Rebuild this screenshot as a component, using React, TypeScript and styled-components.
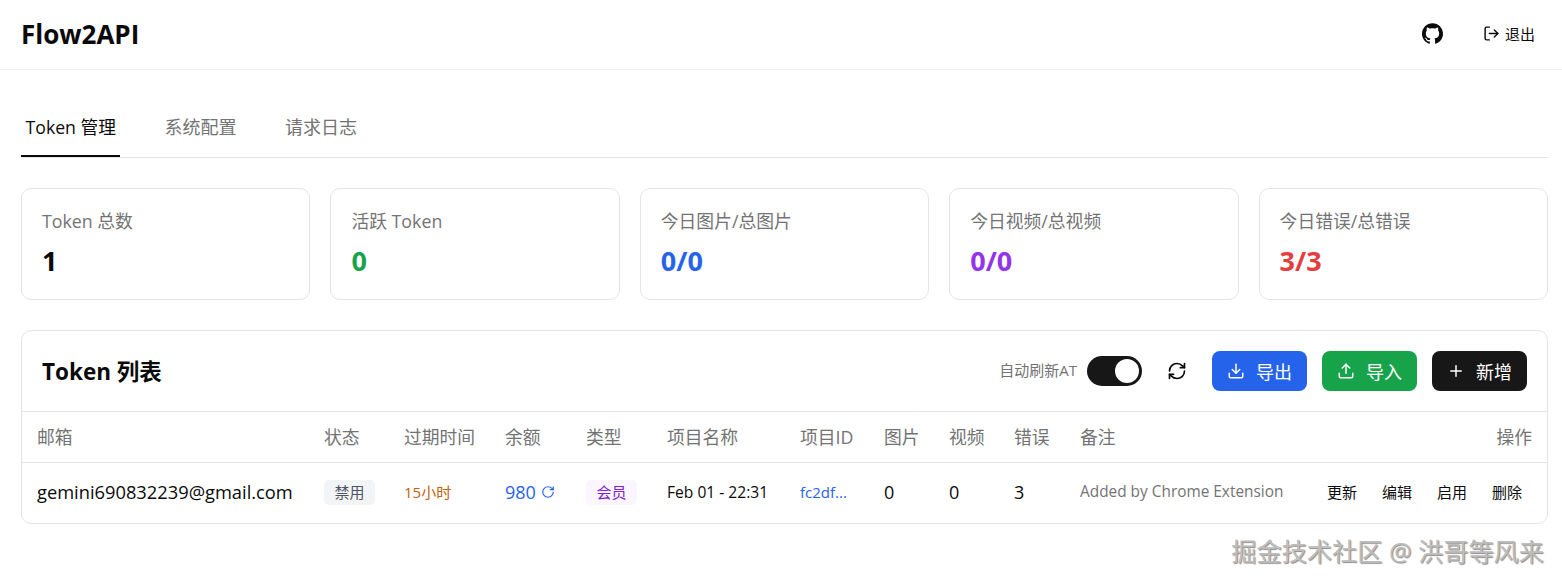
import React from "react";
import styled, { createGlobalStyle } from "styled-components";
import { Download, LogOut, Plus, RefreshCw, RotateCw, Upload } from "lucide-react";
import { SiGithub } from "react-icons/si";

const GlobalStyle = createGlobalStyle`
  html, body {
    margin: 0;
    background: #fff;
    color: #0a0a0a;
    font-family: "Open Sans", "Noto Sans CJK SC", sans-serif;
  }
  * { box-sizing: border-box; }
`;

const Page = styled.div`
  position: relative;
  width: 1562px;
  height: 584px;
  overflow: hidden;
`;

const Header = styled.header`
  height: 70px;
  padding: 0 27px 2px 21px;
  border-bottom: 1px solid #f0f0f0;
  display: flex;
  align-items: center;
  justify-content: space-between;
`;

const Logo = styled.h1`
  margin: 0;
  font-size: 26px;
  font-weight: 700;
`;

const HeaderActions = styled.div`
  display: flex;
  align-items: center;
  gap: 40px;
  font-size: 15px;
`;

const Logout = styled.span`
  display: flex;
  align-items: center;
  gap: 5px;
`;

const Main = styled.main`
  padding: 30px 14px 0 21px;
`;

const Tabs = styled.nav`
  display: flex;
  gap: 39.5px;
  border-bottom: 1px solid #e5e5e5;
`;

const Tab = styled.div<{ $active?: boolean }>`
  height: 57px;
  padding: 15px 4.5px 0;
  font-size: ${(p) => (p.$active ? 17.7 : 18)}px;
  line-height: 24px;
  color: ${(p) => (p.$active ? "#0a0a0a" : "#737373")};
  border-bottom: 2px solid ${(p) => (p.$active ? "#0a0a0a" : "transparent")};
`;

const Stats = styled.section`
  display: grid;
  grid-template-columns: repeat(5, 1fr);
  gap: 20px;
  margin-top: 30px;
`;

const StatCard = styled.div`
  height: 112px;
  padding: 20px 20px 0;
  border: 1px solid #e5e5e5;
  border-radius: 10px;
`;

const StatLabel = styled.div`
  font-size: 17.8px;
  line-height: 24px;
  color: #737373;
`;

const StatValue = styled.div<{ $color: string }>`
  margin-top: 10px;
  font-size: 27px;
  line-height: 36px;
  font-weight: 700;
  color: ${(p) => p.$color};
`;

const ListCard = styled.section`
  margin-top: 30px;
  height: 194px;
  border: 1px solid #e5e5e5;
  border-radius: 10px;
`;

const ListHeader = styled.div`
  height: 81px;
  padding: 0 20px;
  border-bottom: 1px solid #e5e5e5;
  display: flex;
  align-items: center;
  justify-content: space-between;
`;

const ListTitle = styled.h2`
  margin: 0 0 2px;
  font-size: 22.5px;
  font-weight: 700;
`;

const Toolbar = styled.div`
  display: flex;
  align-items: center;
`;

const AutoLabel = styled.span`
  margin: 0 10px 3px 0;
  font-size: 15px;
  color: #737373;
`;

const Switch = styled.span`
  position: relative;
  width: 55px;
  height: 30px;
  border-radius: 15px;
  background: #171717;
  margin-right: 25px;
  &::after {
    content: "";
    position: absolute;
    top: 3px;
    right: 3px;
    width: 24px;
    height: 24px;
    border-radius: 50%;
    background: #fff;
  }
`;

const IconSlot = styled.span`
  display: flex;
  margin-right: 25px;
`;

const ActionButton = styled.button<{ $bg: string }>`
  width: 95px;
  height: 40px;
  margin-left: 15px;
  border: 0;
  border-radius: 8px;
  background: ${(p) => p.$bg};
  color: #fff;
  font: inherit;
  font-size: 18px;
  display: flex;
  align-items: center;
  justify-content: center;
  gap: 11px;
  &:first-of-type {
    margin-left: 0;
  }
`;

const Table = styled.table`
  width: 100%;
  table-layout: fixed;
  border-collapse: collapse;
`;

const Th = styled.th<{ $w?: number; $right?: boolean }>`
  width: ${(p) => (p.$w ? `${p.$w}px` : "auto")};
  height: 50px;
  padding: 0 15px 2px;
  border-bottom: 1px solid #e5e5e5;
  font-size: 17.8px;
  font-weight: 400;
  color: #737373;
  white-space: nowrap;
  text-align: ${(p) => (p.$right ? "right" : "left")};
`;

const Td = styled.td<{ $size?: number; $color?: string }>`
  height: 60px;
  padding: 0 15px 1px;
  font-size: ${(p) => p.$size ?? 18}px;
  color: ${(p) => p.$color ?? "#0a0a0a"};
  white-space: nowrap;
`;

const Email = styled.span`
  font-size: 18.3px;
`;

const Balance = styled.span`
  display: inline-flex;
  align-items: center;
  gap: 5px;
`;

const Badge = styled.span<{ $bg: string; $color: string }>`
  display: inline-block;
  padding: 3px 10.5px;
  border-radius: 5px;
  font-size: 15px;
  line-height: 19px;
  background: ${(p) => p.$bg};
  color: ${(p) => p.$color};
`;

const RowActions = styled.div`
  display: flex;
  justify-content: flex-end;
  gap: 25px;
  padding-right: 10px;
`;

const Watermark = styled.div`
  position: absolute;
  right: 18px;
  top: 534px;
  font-size: 25.2px;
  line-height: 34px;
  color: #bdbdbd;
  text-shadow: 1px 1px 1px #8c8c8c, -1px -1px 0 #fff;
`;

const stats = [
  { label: "Token 总数", value: "1", color: "#0a0a0a" },
  { label: "活跃 Token", value: "0", color: "#16a34a" },
  { label: "今日图片/总图片", value: "0/0", color: "#2563eb" },
  { label: "今日视频/总视频", value: "0/0", color: "#9333ea" },
  { label: "今日错误/总错误", value: "3/3", color: "#e53e3e" },
];

const columns = [
  { title: "邮箱", w: 287 },
  { title: "状态", w: 80 },
  { title: "过期时间", w: 101 },
  { title: "余额", w: 81 },
  { title: "类型", w: 81 },
  { title: "项目名称", w: 133 },
  { title: "项目ID", w: 84 },
  { title: "图片", w: 65 },
  { title: "视频", w: 65 },
  { title: "错误", w: 66 },
  { title: "备注" },
];

const rowActions = ["更新", "编辑", "启用", "删除"];

export default function App() {
  return (
    <Page>
      <GlobalStyle />
      <Header>
        <Logo>Flow2API</Logo>
        <HeaderActions>
          <SiGithub size={21} />
          <Logout>
            <LogOut size={17} />
            退出
          </Logout>
        </HeaderActions>
      </Header>
      <Main>
        <Tabs>
          <Tab $active>Token 管理</Tab>
          <Tab>系统配置</Tab>
          <Tab>请求日志</Tab>
        </Tabs>
        <Stats>
          {stats.map((s) => (
            <StatCard key={s.label}>
              <StatLabel>{s.label}</StatLabel>
              <StatValue $color={s.color}>{s.value}</StatValue>
            </StatCard>
          ))}
        </Stats>
        <ListCard>
          <ListHeader>
            <ListTitle>Token 列表</ListTitle>
            <Toolbar>
              <AutoLabel>自动刷新AT</AutoLabel>
              <Switch />
              <IconSlot>
                <RefreshCw size={20} />
              </IconSlot>
              <ActionButton $bg="#2563eb">
                <Download size={18} />
                导出
              </ActionButton>
              <ActionButton $bg="#16a34a">
                <Upload size={18} />
                导入
              </ActionButton>
              <ActionButton $bg="#171717">
                <Plus size={18} />
                新增
              </ActionButton>
            </Toolbar>
          </ListHeader>
          <Table>
            <thead>
              <tr>
                {columns.map((c) => (
                  <Th key={c.title} $w={c.w}>
                    {c.title}
                  </Th>
                ))}
                <Th $w={240} $right>
                  操作
                </Th>
              </tr>
            </thead>
            <tbody>
              <tr>
                <Td>
                  <Email>gemini690832239@gmail.com</Email>
                </Td>
                <Td>
                  <Badge $bg="#f3f4f6" $color="#4b5563">
                    禁用
                  </Badge>
                </Td>
                <Td $size={15} $color="#c2620c">
                  15小时
                </Td>
                <Td $color="#2563eb">
                  <Balance>
                    980 <RotateCw size={14} />
                  </Balance>
                </Td>
                <Td>
                  <Badge $bg="#faf5ff" $color="#7e22ce">
                    会员
                  </Badge>
                </Td>
                <Td $size={15.6}>Feb 01 - 22:31</Td>
                <Td $size={15} $color="#2563eb">
                  fc2df...
                </Td>
                <Td>0</Td>
                <Td>0</Td>
                <Td>3</Td>
                <Td $size={15.4} $color="#737373">
                  Added by Chrome Extension
                </Td>
                <Td $size={15}>
                  <RowActions>
                    {rowActions.map((a) => (
                      <span key={a}>{a}</span>
                    ))}
                  </RowActions>
                </Td>
              </tr>
            </tbody>
          </Table>
        </ListCard>
      </Main>
      <Watermark>掘金技术社区 @ 洪哥等风来</Watermark>
    </Page>
  );
}
